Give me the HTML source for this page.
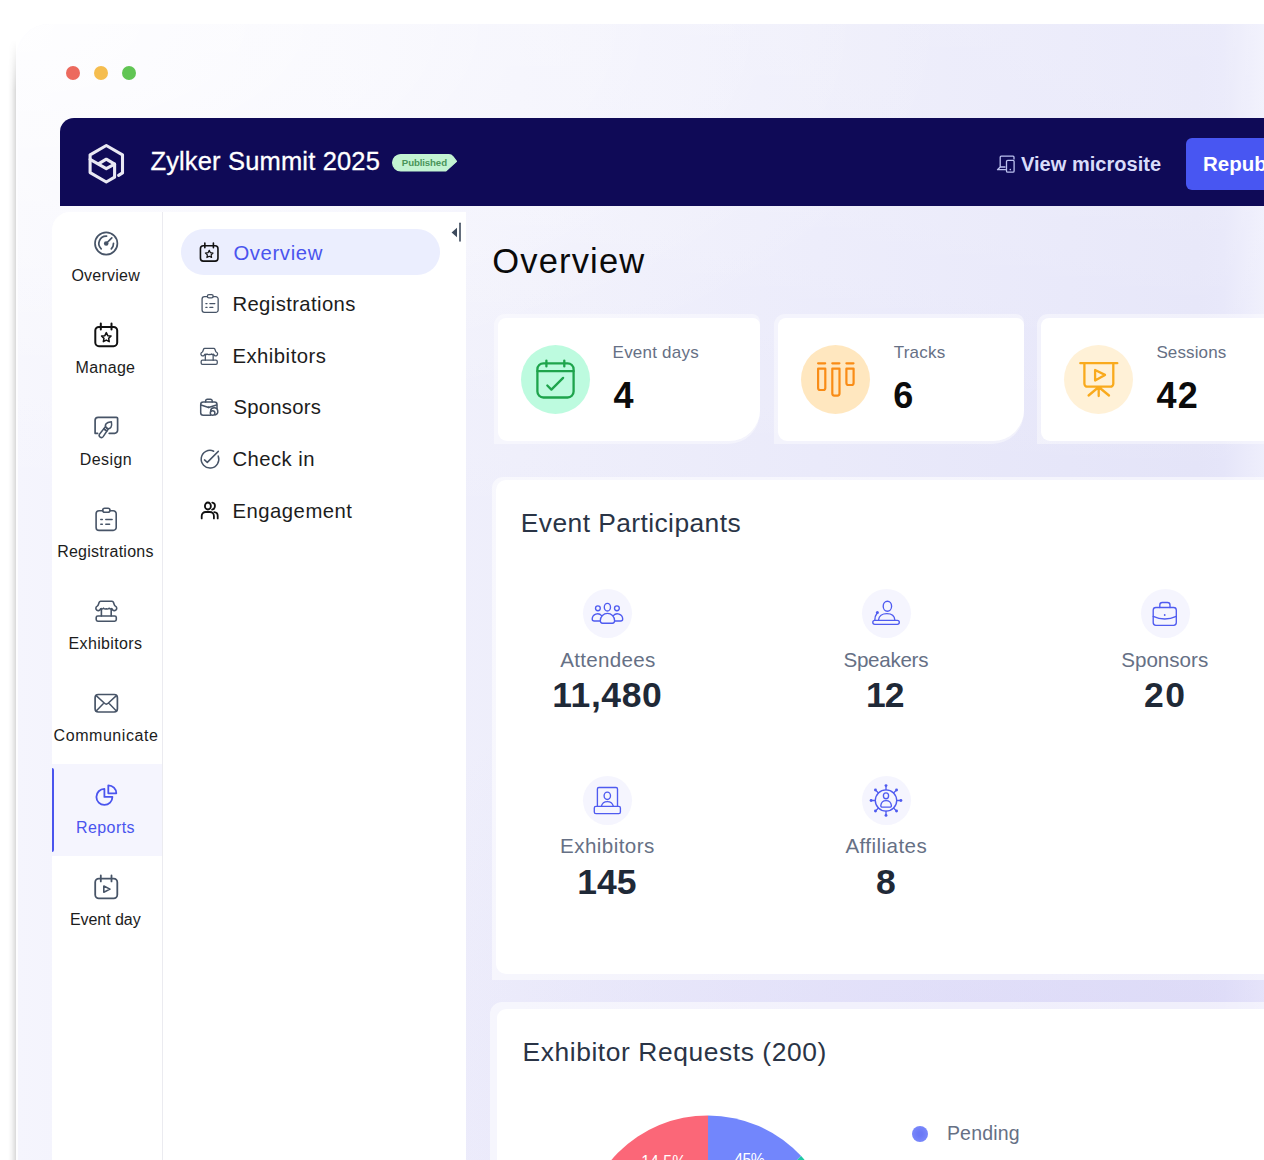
<!DOCTYPE html>
<html lang="en">
<head>
<meta charset="utf-8">
<title>Zylker Summit 2025 - Overview</title>
<style>
*{box-sizing:border-box;margin:0;padding:0}
html,body{width:1264px;height:1160px;overflow:hidden;background:#fff}
body{font-family:"Liberation Sans",sans-serif;position:relative;color:#111}
.abs{position:absolute}
.t{position:absolute;white-space:nowrap}
.shadow{position:absolute;left:8px;top:40px;width:8px;height:1200px;background:linear-gradient(90deg,rgba(0,0,0,0),rgba(0,0,0,.04) 45%,rgba(0,0,0,.15));-webkit-mask-image:linear-gradient(180deg,transparent 0,#000 50px);mask-image:linear-gradient(180deg,transparent 0,#000 50px)}
.win{position:absolute;left:16px;top:24px;width:1300px;height:1200px;border-top-left-radius:33px;border-left:2px solid #fdfdff;
 background:radial-gradient(950px 430px at 0 0,rgba(255,255,255,.85),rgba(255,255,255,.4) 45%,rgba(255,255,255,0)),radial-gradient(800px 650px at 1080px 1137px,rgba(212,206,246,.5),rgba(212,206,246,0)),linear-gradient(180deg,rgba(255,255,255,.28) 0,rgba(255,255,255,.22) 180px,rgba(255,255,255,0) 520px),linear-gradient(90deg,#f5f5fd 0,#f4f4fd 36px,#f1f1fc 300px,#eeeefb 500px,#e9e9fa 800px,#e5e5f9 1050px,#e3e3f8 1180px,#e4e4f9 1205px,#eeeefc 1248px)}
.dot{position:absolute;top:66px;width:14px;height:14px;border-radius:50%}
.hdr{position:absolute;left:60px;top:118px;width:1300px;height:88px;background:#0f0a57;border-top-left-radius:14px}
.btn{position:absolute;left:1185.5px;top:137.7px;width:120px;height:52.3px;border-radius:6px;background:#4856f2}
.nav1{position:absolute;left:52px;top:212px;width:111px;height:1000px;background:#fff;border-top-left-radius:18px}
.div{position:absolute;left:162px;top:212px;width:1px;height:1000px;background:#ebebf0}
.nav2{position:absolute;left:163px;top:212px;width:303px;height:1000px;background:#fff}
.act1{position:absolute;left:52px;top:764px;width:110px;height:92px;background:#f5f5fe}
.act1:before{content:"";position:absolute;left:0;top:3.5px;width:2.3px;height:84px;background:#4a54ee;border-radius:0 2px 2px 0}
.pill{position:absolute;left:181px;top:229px;width:259px;height:46px;border-radius:23px;background:#ebeefe}
.cardo{position:absolute;top:314px;height:130px;background:rgba(255,255,255,.42);border-radius:11px 8px 32px 0}
.card{position:absolute;top:318px;height:123px;background:#fff;border-radius:8px 7px 31px 9px}
.panelo{position:absolute;background:rgba(255,255,255,.55)}
.panel{position:absolute;background:#fff}
.pi{position:absolute;width:49px;height:49px;border-radius:50%;background:#f5f5fe}
svg{display:block;overflow:visible}
</style>
</head>
<body>
<div class="shadow"></div>
<div class="win"></div>
<div class="dot" style="left:66px;background:#ec6a5e"></div>
<div class="dot" style="left:94px;background:#f5bd4f"></div>
<div class="dot" style="left:122px;background:#61c554"></div>
<div class="hdr"></div>
<svg class="abs" style="left:80px;top:136px" width="52" height="52" viewBox="0 0 52 52" fill="none" stroke-linecap="round" stroke-linejoin="round"><g stroke="#e9e9f3" stroke-width="3.1"><path d="M38.6 39.4L42.5 36.9V18.8L26.3 9.5 10.1 18.8V36.6L26.3 46 34.6 41.2V28.2L26.3 23.2 18.8 27.7"/><path d="M10.1 23.3L26.3 32.6 34.6 28.2"/></g></svg>
<svg class="abs" style="left:392.3px;top:154.1px" width="65" height="17.5" viewBox="0 0 65 17.5" fill="none" stroke-linecap="round" stroke-linejoin="round"><path d="M8.75 .6H56.6Q59.4 .6 61.1 2.8L64.5 7.4 54 16.9H8.75A8.15 8.15 0 0 1 8.75 .6Z" fill="#c3f3d2" stroke="#c3f3d2" stroke-width="1.2"/></svg>
<svg class="abs" style="left:990px;top:146px" width="40" height="40" viewBox="0 0 40 40" fill="none" stroke-linecap="round" stroke-linejoin="round"><g stroke="#bcc1ef" stroke-width="1.3"><path d="M24 13V11.2a1 1 0 0 0-1-1H11.2a1 1 0 0 0-1 1V21M15 21H10.2L7.5 23.7H15.5"/><rect x="16.5" y="14.3" width="7.6" height="11.8" rx="1.2"/></g><circle cx="20.3" cy="23.6" r=".8" fill="#bcc1ef"/></svg>
<div class="btn"></div>
<div class="nav1"></div><div class="act1"></div><div class="div"></div>
<div class="nav2"></div><div class="pill"></div>
<svg class="abs" style="left:86px;top:224px" width="40" height="40" viewBox="0 0 40 40" fill="none" stroke-linecap="round" stroke-linejoin="round"><g stroke="#475467" stroke-width="1.7"><circle cx="20.2" cy="19.5" r="11.2"/><path d="M20.6 12.2A7.3 7.3 0 0 0 15.2 24.8"/><path d="M27.5 19.3A7.3 7.3 0 0 1 25.3 24.8"/><path d="M20.2 19.5L25.8 13.8"/></g><circle cx="20.2" cy="19.5" r="2.3" fill="#475467"/></svg>
<svg class="abs" style="left:86px;top:316px" width="40" height="40" viewBox="0 0 40 40" fill="none" stroke-linecap="round" stroke-linejoin="round"><g stroke="#111" stroke-width="2"><rect x="9.3" y="11" width="21.9" height="19.2" rx="3.6"/><path d="M14.8 7.6V13.4M25.5 7.6V13.4"/><path stroke-width="1.5" d="M20.3 16.6l1.45 3.05 3.3.4-2.4 2.3.6 3.3-2.95-1.6-2.95 1.6.6-3.3-2.4-2.3 3.3-.4z"/></g></svg>
<svg class="abs" style="left:86px;top:408px" width="40" height="40" viewBox="0 0 40 40" fill="none" stroke-linecap="round" stroke-linejoin="round"><g transform="translate(0 2)" stroke="#475467" stroke-width="1.7"><path d="M11.6 23.3H9.1V10.3a3 3 0 0 1 3-3H30.4a1.2 1.2 0 0 1 1.2 1.2V20.3a3 3 0 0 1-3 3H23.2"/><g transform="translate(.5 .4) rotate(36 18.5 20)" stroke-width="1.5"><path d="M18.5 9.2c2.2 2 3 3.3 3 4.8a3 3 0 0 1-6 0c0-1.5.8-2.8 3-4.8z"/><path d="M16.6 17.2h3.8v2.2h-3.8z"/><path d="M16.6 19.4h3.8l.3 6.7a2.2 2.2 0 0 1-4.4 0z"/></g></g></svg>
<svg class="abs" style="left:86px;top:500px" width="40" height="40" viewBox="0 0 40 40" fill="none" stroke-linecap="round" stroke-linejoin="round"><g stroke="#475467" stroke-width="1.6"><path d="M16.7 10.8H13.1a3 3 0 0 0-3 3V27.4a3 3 0 0 0 3 3H27.2a3 3 0 0 0 3-3V13.8a3 3 0 0 0-3-3H24"/><rect x="16.7" y="8.2" width="7.3" height="4.1" rx="2"/><path stroke-width="1.5" d="M14.8 19.5h1.5M19.8 19.5h6.3M14.8 24.3h1.5M19.8 24.3h3.8"/></g></svg>
<svg class="abs" style="left:86px;top:592px" width="40" height="40" viewBox="0 0 40 40" fill="none" stroke-linecap="round" stroke-linejoin="round"><g stroke="#475467" stroke-width="1.6"><path d="M14.6 9.3H26a1.5 1.5 0 0 1 1.4 1l.9 2.5c.2.6.6 1 1.1 1.3a2.4 2.4 0 1 1-3.4 2.7 2.7 2.7 0 0 1-2.9-.6 2.7 2.7 0 0 1-2.8.6 2.7 2.7 0 0 1-2.8-.6 2.7 2.7 0 0 1-2.9.6 2.4 2.4 0 1 1-3.4-2.7c.5-.3.9-.7 1.1-1.3l.9-2.5a1.5 1.5 0 0 1 1.4-1z"/><path d="M15.4 16.5V24M25.2 16.5V24"/><rect x="10.2" y="24" width="20.1" height="5.2" rx="1.6"/></g></svg>
<svg class="abs" style="left:86px;top:684px" width="40" height="40" viewBox="0 0 40 40" fill="none" stroke-linecap="round" stroke-linejoin="round"><g stroke="#475467" stroke-width="1.7"><rect x="9.1" y="10.5" width="22.3" height="17.5" rx="3.2"/><path stroke-width="1.5" d="M10.2 11.6l8.3 7.7a2.7 2.7 0 0 0 3.6 0l8.3-7.7M10.2 27l7-7.2M30.4 27l-7-7.2"/></g></svg>
<svg class="abs" style="left:86px;top:776px" width="40" height="40" viewBox="0 0 40 40" fill="none" stroke-linecap="round" stroke-linejoin="round"><g stroke="#4a54ee" stroke-width="1.8"><path d="M18.4 12.9A8 8 0 1 0 26.4 20.9H18.4z"/><path d="M22.3 9.3A8 8 0 0 1 30.3 17.3H22.3z"/></g></svg>
<svg class="abs" style="left:86px;top:868px" width="40" height="40" viewBox="0 0 40 40" fill="none" stroke-linecap="round" stroke-linejoin="round"><g stroke="#475467" stroke-width="1.8"><rect x="9.2" y="10.6" width="22.1" height="19.7" rx="3.6"/><path d="M14.8 7.4V13.4M25.5 7.4V13.4"/><path stroke-width="1.6" d="M17.8 18v6.3l6.2-3.2z"/></g></svg>
<svg class="abs" style="left:193.45px;top:237.25px" width="32" height="32" viewBox="0 0 40 40" fill="none" stroke-linecap="round" stroke-linejoin="round"><g stroke="#111" stroke-width="2"><rect x="9.3" y="11" width="21.9" height="19.2" rx="3.6"/><path d="M14.8 7.6V13.4M25.5 7.6V13.4"/><path stroke-width="1.5" d="M20.3 16.6l1.45 3.05 3.3.4-2.4 2.3.6 3.3-2.95-1.6-2.95 1.6.6-3.3-2.4-2.3 3.3-.4z"/></g></svg>
<svg class="abs" style="left:193.53px;top:288.07px" width="32" height="32" viewBox="0 0 40 40" fill="none" stroke-linecap="round" stroke-linejoin="round"><g stroke="#475467" stroke-width="1.6"><path d="M16.7 10.8H13.1a3 3 0 0 0-3 3V27.4a3 3 0 0 0 3 3H27.2a3 3 0 0 0 3-3V13.8a3 3 0 0 0-3-3H24"/><rect x="16.7" y="8.2" width="7.3" height="4.1" rx="2"/><path stroke-width="1.5" d="M14.8 19.5h1.5M19.8 19.5h6.3M14.8 24.3h1.5M19.8 24.3h3.8"/></g></svg>
<svg class="abs" style="left:193.45px;top:340.85px" width="32" height="32" viewBox="0 0 40 40" fill="none" stroke-linecap="round" stroke-linejoin="round"><g stroke="#475467" stroke-width="1.6"><path d="M14.6 9.3H26a1.5 1.5 0 0 1 1.4 1l.9 2.5c.2.6.6 1 1.1 1.3a2.4 2.4 0 1 1-3.4 2.7 2.7 2.7 0 0 1-2.9-.6 2.7 2.7 0 0 1-2.8.6 2.7 2.7 0 0 1-2.8-.6 2.7 2.7 0 0 1-2.9.6 2.4 2.4 0 1 1-3.4-2.7c.5-.3.9-.7 1.1-1.3l.9-2.5a1.5 1.5 0 0 1 1.4-1z"/><path d="M15.4 16.5V24M25.2 16.5V24"/><rect x="10.2" y="24" width="20.1" height="5.2" rx="1.6"/></g></svg>
<svg class="abs" style="left:190px;top:386px" width="40" height="40" viewBox="0 0 40 40" fill="none" stroke-linecap="round" stroke-linejoin="round"><g stroke="#475467" stroke-width="1.5"><path d="M20.5 29.2H13.2a2.5 2.5 0 0 1-2.5-2.5V18.5a2.5 2.5 0 0 1 2.5-2.5H24.5a2.5 2.5 0 0 1 2.5 2.5V22.5"/><path d="M15.6 16v-1a1.7 1.7 0 0 1 1.7-1.7h3.2a1.7 1.7 0 0 1 1.7 1.7v1"/><path d="M11 19l7.6 2.5 7.9-2.5"/><circle cx="22.6" cy="27" r="2.3"/><path d="M20.6 25.2A3.6 3.6 0 1 1 25 28.9"/></g><circle cx="18.6" cy="21.2" r="1" fill="#475467"/></svg>
<svg class="abs" style="left:190px;top:438px" width="40" height="40" viewBox="0 0 40 40" fill="none" stroke-linecap="round" stroke-linejoin="round"><g stroke="#475467" stroke-width="1.5"><path d="M23.7 13.2A8.8 8.8 0 1 0 28.2 18"/><path d="M14.5 21.9l2.8 2.5 11-11"/></g></svg>
<svg class="abs" style="left:190px;top:490px" width="40" height="40" viewBox="0 0 40 40" fill="none" stroke-linecap="round" stroke-linejoin="round"><g stroke="#111" stroke-width="1.8"><ellipse cx="17.9" cy="16" rx="3" ry="3.5"/><path d="M22.3 12.6c3.6.4 3.6 6.6-.2 7"/><path d="M11.7 28.4V26a4 4 0 0 1 4-4h4.2a4 4 0 0 1 4 4v2.4"/><path d="M24.2 22.1a3.7 3.9 0 0 1 3.5 3.9v2.4"/></g></svg>
<svg class="abs" style="left:450px;top:222px" width="12" height="20" viewBox="0 0 12 20" fill="none" stroke-linecap="round" stroke-linejoin="round"><path d="M7 5.8V15.2L1.6 10.5z" fill="#3d4a5c"/><path d="M10 1.3V19" stroke="#3d4a5c" stroke-width="1.6"/></svg>
<div class="cardo" style="left:494px;width:266px"></div><div class="card" style="left:498px;width:262px"></div>
<div class="abs" style="left:521px;top:345px;width:69px;height:69px;border-radius:50%;background:#bdfbdf"></div>
<svg class="abs" style="left:515px;top:340px" width="80" height="80" viewBox="0 0 80 80" fill="none" stroke-linecap="round" stroke-linejoin="round"><g stroke="#1ea44c" stroke-width="2.3"><rect x="22.4" y="23.3" width="36.2" height="34.2" rx="6"/><path d="M22.4 31.2H58.6M31.4 20.6V26.4M49.3 20.6V26.4M32.3 45.5l4.1 4.1 11.7-11.7"/></g></svg>
<div class="cardo" style="left:774px;width:249.5px"></div><div class="card" style="left:778px;width:245.5px"></div>
<div class="abs" style="left:801.2px;top:345px;width:69px;height:69px;border-radius:50%;background:#ffe7bf"></div>
<svg class="abs" style="left:795px;top:340px" width="80" height="80" viewBox="0 0 80 80" fill="none" stroke-linecap="round" stroke-linejoin="round"><g stroke="#f98c16" stroke-width="2.2"><path d="M23.1 23.3H30.2M37.3 23.3H44.4M51.4 23.3H58.5"/><path d="M23.1 28.7H30.3V48a2 2 0 0 1-2 2H25.1a2 2 0 0 1-2-2zM37.3 28.7H44.5V53.6a2 2 0 0 1-2 2H39.3a2 2 0 0 1-2-2zM51.4 28.7H58.6V43a2 2 0 0 1-2 2H53.4a2 2 0 0 1-2-2z"/></g></svg>
<div class="cardo" style="left:1037px;width:263px"></div><div class="card" style="left:1041px;width:259px"></div>
<div class="abs" style="left:1064px;top:345px;width:69px;height:69px;border-radius:50%;background:#fff1d7"></div>
<svg class="abs" style="left:1058px;top:340px" width="80" height="80" viewBox="0 0 80 80" fill="none" stroke-linecap="round" stroke-linejoin="round"><g stroke="#f9aa1d" stroke-width="2.3"><path d="M22.3 23.2H59.3M26.4 23.2V43.7a3 3 0 0 0 3 3H52.3a3 3 0 0 0 3-3V23.2M37.1 30v10.6l9.9-5.7zM40.7 47L30.6 55.5M40.7 47v9M40.7 47L51 55.5"/></g></svg>
<div class="panelo" style="left:492px;top:477px;width:900px;height:503px;border-radius:11px 0 0 0"></div>
<div class="panel" style="left:496px;top:480px;width:900px;height:494px;border-radius:10px"></div>
<div class="pi" style="left:583px;top:589.3px"></div>
<svg class="abs" style="left:577px;top:583px" width="60" height="60" viewBox="0 0 60 60" fill="none" stroke-linecap="round" stroke-linejoin="round"><g stroke="#4f5bf0" stroke-width="1.35"><ellipse cx="30.4" cy="24.2" rx="3.1" ry="3.8"/><circle cx="20.9" cy="25.3" r="2.4"/><circle cx="39.9" cy="25.3" r="2.4"/><path d="M23.3 37.8a7.15 7.4 0 0 1 14.3 0c0 1.3-.9 2.4-2.2 2.4H25.5c-1.3 0-2.2-1.1-2.2-2.4z"/><path d="M24.6 32.6a5.4 5.4 0 0 0-9.4 3.3c0 1.2.8 2.1 2 2.1h5.5M36.3 32.6a5.4 5.4 0 0 1 9.4 3.3c0 1.2-.8 2.1-2 2.1h-5.5"/></g></svg>
<div class="pi" style="left:861.8px;top:589.3px"></div>
<svg class="abs" style="left:856px;top:583px" width="60" height="60" viewBox="0 0 60 60" fill="none" stroke-linecap="round" stroke-linejoin="round"><g stroke="#4f5bf0" stroke-width="1.35"><ellipse cx="31.4" cy="23.2" rx="4.2" ry="5"/><path d="M22.5 37.2c.3-4 3.8-6.6 8.4-6.6s7.7 2.6 8 6.6"/><rect x="16.8" y="37.3" width="26.5" height="4" rx="2"/><path d="M21.2 30c-1.6 2-2.5 4.3-2.4 7.2"/></g><circle cx="21.4" cy="29.6" r="1.5" fill="#4f5bf0"/></svg>
<div class="pi" style="left:1140.5px;top:589.3px"></div>
<svg class="abs" style="left:1135px;top:583px" width="60" height="60" viewBox="0 0 60 60" fill="none" stroke-linecap="round" stroke-linejoin="round"><g stroke="#4f5bf0" stroke-width="1.35"><rect x="18.2" y="24.5" width="23.1" height="17.8" rx="2.7"/><path d="M24.8 24.5V22a2.5 2.5 0 0 1 2.5-2.5h5.2A2.5 2.5 0 0 1 35 22v2.5M18.2 33.4c7 3.2 16 3.2 23.1 0"/></g><circle cx="29.7" cy="32" r=".9" fill="#4f5bf0"/></svg>
<div class="pi" style="left:583px;top:776px"></div>
<svg class="abs" style="left:577px;top:770px" width="60" height="60" viewBox="0 0 60 60" fill="none" stroke-linecap="round" stroke-linejoin="round"><g stroke="#4f5bf0" stroke-width="1.35"><path d="M20.4 36.3V19a1.5 1.5 0 0 1 1.5-1.5H39a1.5 1.5 0 0 1 1.5 1.5V36.3"/><rect x="17.3" y="36.3" width="26.1" height="7.3" rx="1.6"/><ellipse cx="30.3" cy="25.8" rx="3.2" ry="3.7"/><path d="M24.4 36.2c.7-2.9 2.9-4.6 5.9-4.6s5.3 1.7 6 4.6"/></g></svg>
<div class="pi" style="left:861.8px;top:776px"></div>
<svg class="abs" style="left:856px;top:770px" width="60" height="60" viewBox="0 0 60 60" fill="none" stroke-linecap="round" stroke-linejoin="round"><g stroke="#4f5bf0" stroke-width="1.35"><circle cx="30" cy="30.5" r="10.7"/><path d="M30 19.8L30 16.2M37.57 22.93L40.11 20.39M40.7 30.5L44.3 30.5M37.57 38.07L40.11 40.61M30 41.2L30 44.8M22.43 38.07L19.89 40.61M19.3 30.5L15.7 30.5M22.43 22.93L19.89 20.39"/><ellipse cx="30" cy="25.8" rx="2.6" ry="2.95"/><path d="M24.8 35.6c.3-3 2.4-5 5.3-5s5 2 5.3 5c.1.9-.6 1.5-1.5 1.5h-7.6c-.9 0-1.6-.6-1.5-1.5z"/></g><circle cx="30" cy="15.6" r="1.45" fill="#4f5bf0"/><circle cx="40.54" cy="19.96" r="1.45" fill="#4f5bf0"/><circle cx="44.9" cy="30.5" r="1.45" fill="#4f5bf0"/><circle cx="40.54" cy="41.04" r="1.45" fill="#4f5bf0"/><circle cx="30" cy="45.4" r="1.45" fill="#4f5bf0"/><circle cx="19.46" cy="41.04" r="1.45" fill="#4f5bf0"/><circle cx="15.1" cy="30.5" r="1.45" fill="#4f5bf0"/><circle cx="19.46" cy="19.96" r="1.45" fill="#4f5bf0"/></svg>
<div class="panelo" style="left:490px;top:1002px;width:900px;height:300px;border-radius:12px"></div>
<div class="panel" style="left:497px;top:1009px;width:900px;height:300px;border-radius:9px"></div>
<svg class="abs" style="left:0;top:0" width="1264" height="1160" viewBox="0 0 1264 1160"><path d="M708 1242.4V1115.4A127 127 0 0 0 581 1242.4z" fill="#fb6778"/><path d="M708 1242.4V1115.4A127 127 0 0 1 801.18 1156.11z" fill="#7286fc"/><path d="M708 1242.4L801.18 1156.11A127 127 0 0 1 835 1242.4z" fill="#1fc8a4"/></svg>
<div class="abs" style="left:912.3px;top:1125.6px;width:16px;height:16px;border-radius:50%;background:radial-gradient(circle,#6b79f6 20%,#7a89fb 75%)"></div>
<div class="t" style="left:150.4px;top:145.5px;font-size:25.5px;line-height:31px;color:#fff;letter-spacing:0.16px;-webkit-text-stroke:.3px #fff">Zylker Summit 2025</div>
<div class="t" style="left:401.8px;top:156.5px;font-size:9.7px;line-height:12px;color:#4a955a;font-weight:bold;letter-spacing:-0.13px">Published</div>
<div class="t" style="left:1021.0px;top:151.8px;font-size:20px;line-height:24px;color:#d9dcfa;font-weight:bold;letter-spacing:0.03px">View microsite</div>
<div class="t" style="left:1203.0px;top:151.4px;font-size:20.5px;line-height:25px;color:#fff;font-weight:bold">Republish</div>
<div class="t" style="left:71.4px;top:265.7px;font-size:16px;line-height:19px;color:#1c1c1c;letter-spacing:0.24px">Overview</div>
<div class="t" style="left:75.5px;top:357.7px;font-size:16px;line-height:19px;color:#1c1c1c;letter-spacing:0.34px">Manage</div>
<div class="t" style="left:79.8px;top:449.7px;font-size:16px;line-height:19px;color:#1c1c1c;letter-spacing:0.42px">Design</div>
<div class="t" style="left:57.2px;top:541.7px;font-size:16px;line-height:19px;color:#1c1c1c;letter-spacing:0.24px">Registrations</div>
<div class="t" style="left:68.5px;top:633.7px;font-size:16px;line-height:19px;color:#1c1c1c;letter-spacing:0.36px">Exhibitors</div>
<div class="t" style="left:53.6px;top:725.7px;font-size:16px;line-height:19px;color:#1c1c1c;letter-spacing:0.55px">Communicate</div>
<div class="t" style="left:75.9px;top:817.7px;font-size:16px;line-height:19px;color:#4a54ee;letter-spacing:0.45px">Reports</div>
<div class="t" style="left:69.9px;top:909.7px;font-size:16px;line-height:19px;color:#1c1c1c;letter-spacing:-0.04px">Event day</div>
<div class="t" style="left:233.4px;top:240.6px;font-size:20.3px;line-height:24px;color:#4a54ee;letter-spacing:0.63px">Overview</div>
<div class="t" style="left:232.4px;top:292.2px;font-size:20.3px;line-height:24px;color:#1c1c1c;letter-spacing:0.39px">Registrations</div>
<div class="t" style="left:232.4px;top:343.8px;font-size:20.3px;line-height:24px;color:#1c1c1c;letter-spacing:0.50px">Exhibitors</div>
<div class="t" style="left:233.4px;top:395.4px;font-size:20.3px;line-height:24px;color:#1c1c1c;letter-spacing:0.25px">Sponsors</div>
<div class="t" style="left:232.4px;top:447.0px;font-size:20.3px;line-height:24px;color:#1c1c1c;letter-spacing:0.47px">Check in</div>
<div class="t" style="left:232.4px;top:498.6px;font-size:20.3px;line-height:24px;color:#1c1c1c;letter-spacing:0.51px">Engagement</div>
<div class="t" style="left:492.3px;top:241.4px;font-size:34.5px;line-height:41px;color:#0a0a0a;letter-spacing:1.16px">Overview</div>
<div class="t" style="left:612.6px;top:343.0px;font-size:17px;line-height:20px;color:#667085;letter-spacing:0.22px">Event days</div>
<div class="t" style="left:893.7px;top:343.0px;font-size:17px;line-height:20px;color:#667085;letter-spacing:0.23px">Tracks</div>
<div class="t" style="left:1156.4px;top:343.0px;font-size:17px;line-height:20px;color:#667085;letter-spacing:0.12px">Sessions</div>
<div class="t" style="left:613.6px;top:374.3px;font-size:36px;line-height:43px;color:#0b0b0b;font-weight:bold">4</div>
<div class="t" style="left:893.3px;top:374.3px;font-size:36px;line-height:43px;color:#0b0b0b;font-weight:bold">6</div>
<div class="t" style="left:1156.4px;top:374.3px;font-size:36px;line-height:43px;color:#0b0b0b;font-weight:bold;letter-spacing:1.30px">42</div>
<div class="t" style="left:520.8px;top:507.0px;font-size:26.4px;line-height:32px;color:#2a3446;letter-spacing:0.42px">Event Participants</div>
<div class="t" style="left:560.2px;top:646.5px;font-size:20.6px;line-height:25px;color:#667085;letter-spacing:0.29px">Attendees</div>
<div class="t" style="left:552.2px;top:674.4px;font-size:35.5px;line-height:43px;color:#1f2937;font-weight:bold;letter-spacing:0.58px">11,480</div>
<div class="t" style="left:843.5px;top:646.5px;font-size:20.6px;line-height:25px;color:#667085;letter-spacing:-0.29px">Speakers</div>
<div class="t" style="left:866.0px;top:674.4px;font-size:35.5px;line-height:43px;color:#1f2937;font-weight:bold;letter-spacing:-1.00px">12</div>
<div class="t" style="left:1121.2px;top:646.5px;font-size:20.6px;line-height:25px;color:#667085">Sponsors</div>
<div class="t" style="left:1144.1px;top:674.4px;font-size:35.5px;line-height:43px;color:#1f2937;font-weight:bold;letter-spacing:1.30px">20</div>
<div class="t" style="left:560.0px;top:833.2px;font-size:20.6px;line-height:25px;color:#667085;letter-spacing:0.43px">Exhibitors</div>
<div class="t" style="left:577.3px;top:861.1px;font-size:35.5px;line-height:43px;color:#1f2937;font-weight:bold;letter-spacing:-0.04px">145</div>
<div class="t" style="left:845.4px;top:833.2px;font-size:20.6px;line-height:25px;color:#667085;letter-spacing:0.43px">Affiliates</div>
<div class="t" style="left:875.9px;top:861.1px;font-size:35.5px;line-height:43px;color:#1f2937;font-weight:bold">8</div>
<div class="t" style="left:522.5px;top:1035.9px;font-size:26.4px;line-height:32px;color:#2a3446;letter-spacing:0.58px">Exhibitor Requests (200)</div>
<div class="t" style="left:946.9px;top:1122.0px;font-size:19.5px;line-height:23px;color:#667085;letter-spacing:0.21px">Pending</div>
<div class="t" style="left:641.2px;top:1152.4px;font-size:15.7px;line-height:19px;color:#fff;letter-spacing:0.12px">14.5%</div>
<div class="t" style="left:734.2px;top:1150.1px;font-size:15.7px;line-height:19px;color:#fff;letter-spacing:-0.42px">45%</div>
</body>
</html>
